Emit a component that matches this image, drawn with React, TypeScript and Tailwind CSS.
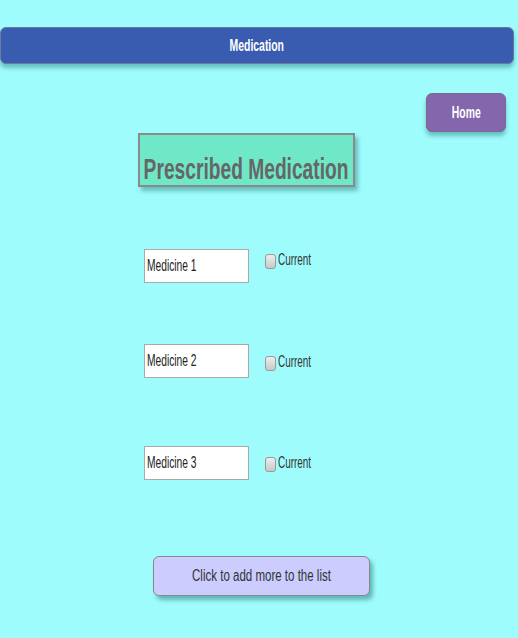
import React from "react";

const rows = [
  { name: "Medicine 1", mt: "mt-[62px]", cb: "mt-[1px]" },
  { name: "Medicine 2", mt: "mt-[61px]", cb: "mt-[8px]" },
  { name: "Medicine 3", mt: "mt-[68px]", cb: "mt-[7px]" },
];

const font = { fontFamily: '"Liberation Sans", Arial, sans-serif' };

export default function App() {
  return (
    <div className="w-[518px] h-[638px] bg-[#9ffcfc] overflow-hidden" style={font}>
      <div className="pt-[27px] pr-[4px]">
        <div className="h-[37px] rounded-[6px] bg-[#3a5cb0] border border-[#6b7aa0] shadow-[0_4px_4px_rgba(0,80,80,0.35)] flex items-center justify-center text-white font-bold text-[16px]">
          <span className="inline-block whitespace-nowrap scale-x-[0.65]">Medication</span>
        </div>
      </div>
      <div className="flex justify-end pr-[12px] mt-[29px]">
        <button className="w-[80px] h-[39px] rounded-[6px] bg-[#8466ac] border border-[#7a6a90] shadow-[0_4px_4px_rgba(0,80,80,0.35)] text-white font-bold text-[16px] flex items-center justify-center">
          <span className="inline-block whitespace-nowrap scale-x-[0.65]">Home</span>
        </button>
      </div>
      <div className="pl-[138px] mt-[1px]">
        <div className="w-[217px] h-[54px] bg-[#6fe8c8] border-2 border-[#8a8a8a] shadow-[3px_4px_4px_rgba(0,80,80,0.35)] flex items-center justify-center text-[#666] font-bold text-[30px] pt-[16px]">
          <span className="inline-block whitespace-nowrap scale-x-[0.64]">Prescribed Medication</span>
        </div>
      </div>
      <div className="flex flex-col pl-[144px]">
        {rows.map((r) => (
          <div key={r.name} className={`flex items-start ${r.mt}`}>
            <div className="w-[105px] h-[34px] bg-white border border-[#aaa] flex items-center pl-[2px] text-[16px] text-[#222] overflow-hidden">
              <span className="inline-block whitespace-nowrap scale-x-[0.64] origin-left">{r.name}</span>
            </div>
            <label className={`flex items-center text-[16px] text-[#333] ml-[16px] ${r.cb}`}>
              <span className="w-[11px] h-[15px] rounded-[3px] border border-[#999] bg-gradient-to-b from-[#eee] to-[#c8c8c8] inline-block" />
              <span className="inline-block whitespace-nowrap scale-x-[0.62] origin-left ml-[2px] -mt-[2px]">Current</span>
            </label>
          </div>
        ))}
      </div>
      <div className="pl-[153px] mt-[76px]">
        <button className="w-[217px] h-[40px] rounded-[6px] bg-[#ccccff] border border-[#888] shadow-[3px_4px_4px_rgba(0,80,80,0.4)] text-[#333] text-[16px] flex items-center justify-center">
          <span className="inline-block whitespace-nowrap scale-x-[0.72]">Click to add more to the list</span>
        </button>
      </div>
    </div>
  );
}
